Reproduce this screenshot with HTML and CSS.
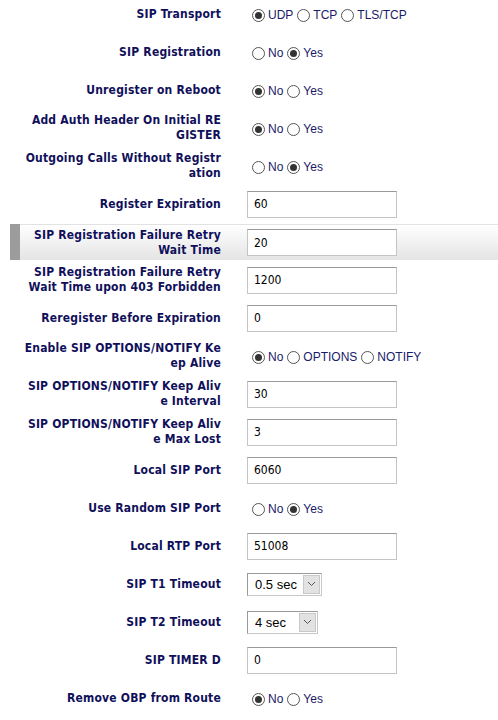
FILE: index.html
```html
<!DOCTYPE html>
<html lang="en">
<head>
    <meta charset="UTF-8">
    <meta name="viewport" content="width=device-width, initial-scale=1.0">
    <title>SIP Settings</title>
    <link rel="stylesheet" href="styles.css">
</head>
<body>
    <table class="settings">
        <tr>
            <td class="mark"></td>
            <td class="label">SIP Transport</td>
            <td class="value">
                <div class="radios">
                    <label class="opt"><input type="radio" name="transport" checked>UDP</label>
                    <label class="opt"><input type="radio" name="transport">TCP</label>
                    <label class="opt"><input type="radio" name="transport">TLS/TCP</label>
                </div>
            </td>
        </tr>
        <tr>
            <td class="mark"></td>
            <td class="label">SIP Registration</td>
            <td class="value">
                <div class="radios">
                    <label class="opt"><input type="radio" name="reg">No</label>
                    <label class="opt"><input type="radio" name="reg" checked>Yes</label>
                </div>
            </td>
        </tr>
        <tr>
            <td class="mark"></td>
            <td class="label">Unregister on Reboot</td>
            <td class="value">
                <div class="radios">
                    <label class="opt"><input type="radio" name="unreg" checked>No</label>
                    <label class="opt"><input type="radio" name="unreg">Yes</label>
                </div>
            </td>
        </tr>
        <tr>
            <td class="mark"></td>
            <td class="label">Add Auth Header On Initial RE<br>GISTER</td>
            <td class="value">
                <div class="radios">
                    <label class="opt"><input type="radio" name="auth" checked>No</label>
                    <label class="opt"><input type="radio" name="auth">Yes</label>
                </div>
            </td>
        </tr>
        <tr>
            <td class="mark"></td>
            <td class="label">Outgoing Calls Without Registr<br>ation</td>
            <td class="value">
                <div class="radios">
                    <label class="opt"><input type="radio" name="outgoing">No</label>
                    <label class="opt"><input type="radio" name="outgoing" checked>Yes</label>
                </div>
            </td>
        </tr>
        <tr>
            <td class="mark"></td>
            <td class="label">Register Expiration</td>
            <td class="value"><input class="text" type="text" value="60"></td>
        </tr>
        <tr class="active">
            <td class="mark"></td>
            <td class="label">SIP Registration Failure Retry<br>Wait Time</td>
            <td class="value"><input class="text" type="text" value="20"></td>
        </tr>
        <tr>
            <td class="mark"></td>
            <td class="label">SIP Registration Failure Retry<br>Wait Time upon 403 Forbidden</td>
            <td class="value"><input class="text" type="text" value="1200"></td>
        </tr>
        <tr>
            <td class="mark"></td>
            <td class="label">Reregister Before Expiration</td>
            <td class="value"><input class="text" type="text" value="0"></td>
        </tr>
        <tr>
            <td class="mark"></td>
            <td class="label">Enable SIP OPTIONS/NOTIFY Ke<br>ep Alive</td>
            <td class="value">
                <div class="radios">
                    <label class="opt"><input type="radio" name="keepalive" checked>No</label>
                    <label class="opt"><input type="radio" name="keepalive">OPTIONS</label>
                    <label class="opt"><input type="radio" name="keepalive">NOTIFY</label>
                </div>
            </td>
        </tr>
        <tr>
            <td class="mark"></td>
            <td class="label">SIP OPTIONS/NOTIFY Keep Aliv<br>e Interval</td>
            <td class="value"><input class="text" type="text" value="30"></td>
        </tr>
        <tr>
            <td class="mark"></td>
            <td class="label">SIP OPTIONS/NOTIFY Keep Aliv<br>e Max Lost</td>
            <td class="value"><input class="text" type="text" value="3"></td>
        </tr>
        <tr>
            <td class="mark"></td>
            <td class="label">Local SIP Port</td>
            <td class="value"><input class="text" type="text" value="6060"></td>
        </tr>
        <tr>
            <td class="mark"></td>
            <td class="label">Use Random SIP Port</td>
            <td class="value">
                <div class="radios">
                    <label class="opt"><input type="radio" name="random">No</label>
                    <label class="opt"><input type="radio" name="random" checked>Yes</label>
                </div>
            </td>
        </tr>
        <tr>
            <td class="mark"></td>
            <td class="label">Local RTP Port</td>
            <td class="value"><input class="text" type="text" value="51008"></td>
        </tr>
        <tr>
            <td class="mark"></td>
            <td class="label">SIP T1 Timeout</td>
            <td class="value">
                <span class="select t1"><select><option>0.5 sec</option><option>1 sec</option><option>2 sec</option></select><span class="arrow"><svg width="9" height="6" viewBox="0 0 9 6"><path d="M1 1 L4.5 4.5 L8 1" fill="none" stroke="#555" stroke-width="1"/></svg></span></span>
            </td>
        </tr>
        <tr>
            <td class="mark"></td>
            <td class="label">SIP T2 Timeout</td>
            <td class="value">
                <span class="select t2"><select><option>4 sec</option><option>8 sec</option><option>16 sec</option></select><span class="arrow"><svg width="9" height="6" viewBox="0 0 9 6"><path d="M1 1 L4.5 4.5 L8 1" fill="none" stroke="#555" stroke-width="1"/></svg></span></span>
            </td>
        </tr>
        <tr>
            <td class="mark"></td>
            <td class="label">SIP TIMER D</td>
            <td class="value"><input class="text" type="text" value="0"></td>
        </tr>
        <tr>
            <td class="mark"></td>
            <td class="label">Remove OBP from Route</td>
            <td class="value">
                <div class="radios">
                    <label class="opt"><input type="radio" name="obp" checked>No</label>
                    <label class="opt"><input type="radio" name="obp">Yes</label>
                </div>
            </td>
        </tr>
    </table>
</body>
</html>
```

FILE: styles.css
```css
* { margin: 0; padding: 0; box-sizing: border-box; }
body { background: #fff; overflow: hidden; }
.settings { margin: -6px 0 0 10px; width: 488px; table-layout: fixed; border-collapse: separate; border-spacing: 0 2px; }
.settings td { height: 36px; vertical-align: middle; }
.mark { width: 10px; }
.label { width: 201px; text-align: right; white-space: nowrap; font-family: "DejaVu Sans Condensed", "DejaVu Sans", sans-serif; font-weight: bold; font-size: 12px; letter-spacing: 0.2px; line-height: 15px; color: #10105a; }
.value { padding-left: 26px; font-family: "Liberation Sans", Arial, sans-serif; font-size: 12px; color: #1a1a6a; }
.active td { background: linear-gradient(#ffffff, #e4e4e4); border-top: 1px solid #e2e2e2; }
.active .mark { background: #9c9c9c; border-top: 0; }
.radios { display: flex; align-items: center; padding-left: 5px; padding-top: 2px; }
.opt { display: flex; align-items: center; margin-right: 4px; }
.opt input { appearance: none; flex: none; width: 13px; height: 13px; border: 1px solid #555; border-radius: 50%; background: #fff; margin-right: 3px; display: grid; place-content: center; }
.opt input:checked::before { content: ""; width: 7px; height: 7px; border-radius: 50%; background: #333; }
.text { display: block; width: 150px; height: 27px; border: 1px solid #c4c4c4; border-top-color: #9a9a9a; padding: 0 6px; font-family: "DejaVu Sans Condensed", "DejaVu Sans", sans-serif; font-size: 12px; color: #000; outline: none; }
.select { display: flex; height: 23px; border: 1px solid #c8c8c8; border-top-color: #9a9a9a; border-left-color: #9a9a9a; background: #fff; }
.select select { appearance: none; flex: 1; min-width: 0; border: 0; background: transparent; padding: 0 0 0 7px; font-family: "Liberation Sans", Arial, sans-serif; font-size: 13px; color: #000; outline: none; }
.t1 { width: 75px; }
.t2 { width: 71px; }
.arrow { width: 17px; margin: 1px; background: #e2e2e2; border: 1px solid #c8c8c8; display: flex; align-items: center; justify-content: center; }
```
